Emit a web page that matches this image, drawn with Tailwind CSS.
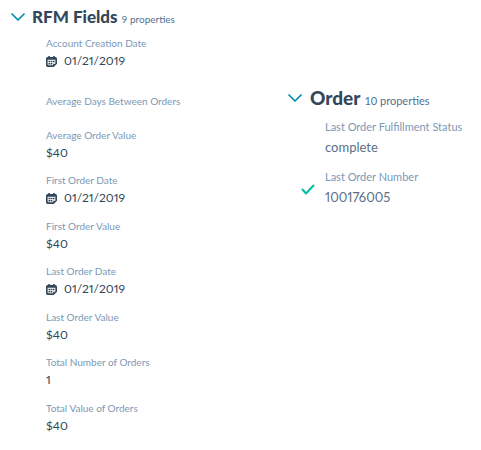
<!DOCTYPE html>
<html lang="en">
<head>
<meta charset="utf-8">
<meta name="viewport" content="width=device-width, initial-scale=1">
<title>Contact properties</title>
<script src="https://cdn.jsdelivr.net/npm/@tailwindcss/browser@4"></script>
</head>
<body class="bg-white font-[Lato,sans-serif] text-[#33475b]">
<svg class="hidden">
  <symbol id="chevron" viewBox="0 0 14 8"><path d="M1 1l6 6 6-6" fill="none" stroke="#0091ae" stroke-width="1.7" stroke-linecap="round" stroke-linejoin="round"/></symbol>
  <symbol id="calendar" viewBox="0 0 20 20">
    <path fill="#33475b" fill-rule="evenodd" d="M4 0h3v2h6V0h3v2h1q3 0 3 3v9l-6 6H3q-3 0-3-3V5q0-3 3-3h1zM3 7v8q0 2 2 2h8v-3h4V7z"/>
    <path fill="#33475b" d="M4.500 8.500h3v3h-3zM8.500 8.500h3v3h-3zM12.500 8.500h3v3h-3zM4.500 12.500h3v3h-3zM8.500 12.500h3v3h-3z"/>
  </symbol>
</svg>
<main class="grid grid-cols-[276fr_205fr]">
  <section class="pl-[11px]">
    <h2 class="h-[35px]">
      <button type="button" aria-expanded="true" class="flex h-[34px] items-center whitespace-nowrap">
        <svg class="mr-[7px] h-2 w-3.5 shrink-0"><use href="#chevron"/></svg>
        <span class="flex items-baseline gap-1"><span class="text-[17px] font-black">RFM Fields</span><span class="text-[10px] text-[#516f90]">9 properties</span></span>
      </button>
    </h2>
    <dl class="flex flex-col gap-2.5 pl-[35px] text-xs proportional-nums">
      <div class="pb-3"><dt class="text-[10px] leading-4 text-[#7c98b6]">Account Creation Date</dt><dd class="flex h-5 items-center gap-[7px]"><svg class="size-[11px]"><use href="#calendar"/></svg>01/21/2019</dd></div>
      <div><dt class="text-[10px] leading-4 text-[#7c98b6]">Average Days Between Orders</dt><dd class="h-2"></dd></div>
      <div><dt class="text-[10px] leading-4 text-[#7c98b6]">Average Order Value</dt><dd class="leading-[19px]">$40</dd></div>
      <div><dt class="text-[10px] leading-4 text-[#7c98b6]">First Order Date</dt><dd class="flex h-5 items-center gap-[7px]"><svg class="size-[11px]"><use href="#calendar"/></svg>01/21/2019</dd></div>
      <div><dt class="text-[10px] leading-4 text-[#7c98b6]">First Order Value</dt><dd class="leading-[19px]">$40</dd></div>
      <div><dt class="text-[10px] leading-4 text-[#7c98b6]">Last Order Date</dt><dd class="flex h-5 items-center gap-[7px]"><svg class="size-[11px]"><use href="#calendar"/></svg>01/21/2019</dd></div>
      <div><dt class="text-[10px] leading-4 text-[#7c98b6]">Last Order Value</dt><dd class="leading-[19px]">$40</dd></div>
      <div><dt class="text-[10px] leading-4 text-[#7c98b6]">Total Number of Orders</dt><dd class="leading-5">1</dd></div>
      <div><dt class="text-[10px] leading-4 text-[#7c98b6]">Total Value of Orders</dt><dd class="leading-5">$40</dd></div>
    </dl>
  </section>
  <section class="pt-20 pl-3">
    <h2 class="h-9">
      <button type="button" aria-expanded="true" class="flex h-9 items-center whitespace-nowrap">
        <svg class="mr-2 h-2 w-3.5 shrink-0"><use href="#chevron"/></svg>
        <span class="flex items-baseline gap-1"><span class="text-[19px] leading-7 font-black">Order</span><span class="text-[11px] text-[#516f90]">10 properties</span></span>
      </button>
    </h2>
    <dl class="flex flex-col gap-2.5 pl-[37px] text-[13px] text-[#5b7087] proportional-nums">
      <div><dt class="text-[11px] leading-[22px] whitespace-nowrap text-[#7c98b6]">Last Order Fulfillment Status</dt><dd class="leading-[18px]">complete</dd></div>
      <div class="relative"><svg class="absolute top-[18px] -left-6 h-[11px] w-3.5" viewBox="0 0 14 11" aria-hidden="true"><path d="M1.500 5.500l3.500 4 7.500-8" fill="none" stroke="#00bda5" stroke-width="2" stroke-linecap="round" stroke-linejoin="round"/></svg><dt class="text-[11px] leading-[22px] text-[#7c98b6]">Last Order Number</dt><dd class="leading-[18px]">100176005</dd></div>
    </dl>
  </section>
</main>
</body>
</html>
